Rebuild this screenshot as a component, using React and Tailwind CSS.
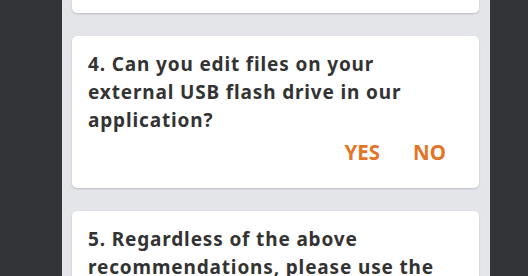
const questions = [
  { n: 4, text: 'Can you edit files on your external USB flash drive in our application?' },
  {
    n: 5,
    text: 'Regardless of the above recommendations, please use the application to safely remove your USB flash drive before unplugging it?',
  },
]

function Card({ q }) {
  return (
    <div className="bg-white rounded-[5px] shadow-[0_1px_2px_rgba(0,0,0,0.18)] pt-[14px] pb-[22px] pl-4">
      <div className="pr-5 text-[19px] font-bold leading-[28px] tracking-[0.85px] text-[#333333]">
        {q.n}. {q.text}
      </div>
      <div className="mt-[4px] pr-[17px] flex justify-end gap-px text-[20.5px] font-bold leading-[28px] text-[#e37527]">
        <button className="px-4">YES</button>
        <button className="px-4">NO</button>
      </div>
    </div>
  )
}

export default function App() {
  return (
    <div className="h-[276px] w-[528px] overflow-hidden flex bg-[#333437] font-['Noto_Sans',sans-serif]">
      <div className="w-[62px] shrink-0" />
      <div className="w-[428px] shrink-0 bg-[#e4e5e9] pl-[10px] pr-[11px] flex flex-col gap-[23px]">
        <div className="h-[13px] shrink-0 bg-white rounded-b-[5px] shadow-[0_1px_2px_rgba(0,0,0,0.18)]" />
        {questions.map(q => (
          <Card key={q.n} q={q} />
        ))}
      </div>
      <div className="flex-1" />
    </div>
  )
}
